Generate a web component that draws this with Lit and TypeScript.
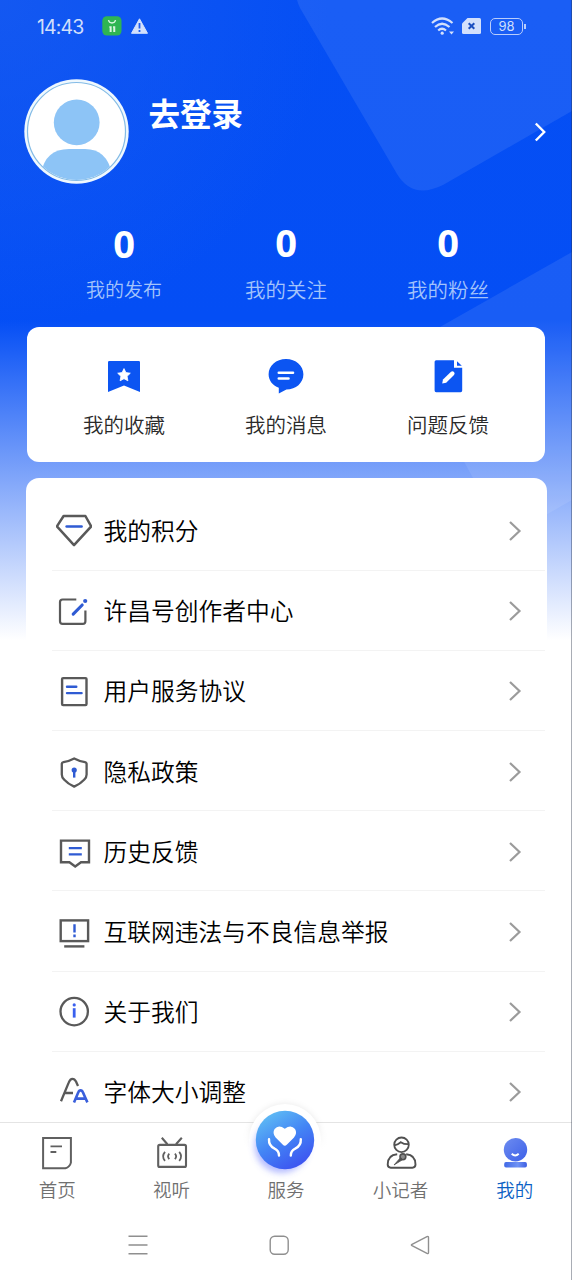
import { LitElement, html, svg, css, type TemplateResult } from "lit";
import { customElement, property } from "lit/decorators.js";
import { classMap } from "lit/directives/class-map.js";

const G = "#595959";
const B = "#2f5bd3";

/* ---------- menu icons, 36 x 36 ---------- */
const menuIcons: Record<string, TemplateResult> = {
  points: svg`<path d="M7.6 3H29.4L35.2 13.4 18 32.2.9 13.4Z" stroke=${G} stroke-width="2.5" stroke-linejoin="round"/>
    <path d="M10.6 13.4H25.6" stroke=${B} stroke-width="2.5" stroke-linecap="round"/>`,
  creator: svg`<path d="M20.3 6.5H6.6Q4 6.5 4 9.1V28.2Q4 30.8 6.6 30.8H26.8Q29.4 30.8 29.4 28.2V17.6" stroke=${G} stroke-width="2.2"/>
    <path d="M17.2 21.2 26.2 12" stroke=${B} stroke-width="3.1" stroke-linecap="round"/>
    <circle cx="29.2" cy="8" r="2.1" fill=${B}/>`,
  terms: svg`<rect x="6.1" y="5.1" width="24.4" height="27" rx="1" stroke=${G} stroke-width="2.4"/>
    <path d="M11 13.8H20.3M11 20.1H25.6" stroke=${B} stroke-width="2.4" stroke-linecap="round"/>`,
  privacy: svg`<path d="M18.2 4.4Q24 7.4 29 8.2 30.6 8.5 30.6 10V20.5Q30.6 23.2 28.4 25.4 24.4 29.8 18.2 32.6 12 29.8 8 25.4 5.8 23.2 5.8 20.5V10Q5.8 8.5 7.4 8.2 12.4 7.4 18.2 4.4Z" stroke=${G} stroke-width="2.3" stroke-linejoin="round"/>
    <circle cx="18.2" cy="16" r="2.6" fill=${B}/><path d="M18.2 16V23.6" stroke=${B} stroke-width="2.4"/>`,
  history: svg`<path d="M5 6.6H33V28.2H25L19.2 32.4 13.4 28.2H5Z" stroke=${G} stroke-width="2.4"/>
    <path d="M12.8 14.1H25.8M12.8 20.3H25.8" stroke=${B} stroke-width="2.3"/>`,
  report: svg`<rect x="4.7" y="6.4" width="27.4" height="20.7" stroke=${G} stroke-width="2.4"/>
    <path d="M8.2 32.4H28.4" stroke=${G} stroke-width="2.4"/>
    <path d="M18.5 10.2V18.6M18.5 20.6V23.2" stroke=${B} stroke-width="2.4"/>`,
  about: svg`<circle cx="18.2" cy="17.6" r="13.7" stroke=${G} stroke-width="2.3"/>
    <circle cx="18.2" cy="10.9" r="1.6" fill="#3a60ee"/><path d="M18.2 14.2V23.6" stroke="#3a60ee" stroke-width="2.8"/>`,
  font: svg`<path d="M5 27.2 12.8 8.4Q14.2 4.8 16.4 4.8 18.6 4.8 20 7.6L22 12M8.4 19H17" stroke=${G} stroke-width="2.3"/>
    <path d="M18 28.4 22.2 18.6Q23 16.4 24.6 16.4 26.2 16.4 27 18.6L31.4 28.4M20 24.6H29.6" stroke="#3a5fdc" stroke-width="2.6"/>`,
};

/* ---------- shortcut icons, 40 x 40 ---------- */
const quickIcons: Record<string, TemplateResult> = {
  fav: svg`<path d="M4 6.2Q4 5 5.2 5H34.8Q36 5 36 6.2V36L20 29.4 4 36Z" fill="#0c55f2"/>
    <path d="M20 12.6 21.9 16.6 26.3 17.2 23.1 20.3 23.9 24.8 20 22.7 16.1 24.8 16.9 20.3 13.7 17.2 18.1 16.6Z" fill="#fff" stroke="#fff" stroke-width=".8" stroke-linejoin="round"/>`,
  msg: svg`<path d="M20 3C29.9 3 37.4 9.7 37.4 18.3S29.9 33.6 20.4 33.6L12.8 37.6V31.8C6.5 29.4 2.6 24.4 2.6 18.3 2.6 9.7 10.1 3 20 3Z" fill="#0c55f2"/>
    <path d="M12.8 16.7H27M12.8 22.5H22.5" stroke="#fff" stroke-width="2.6" stroke-linecap="round"/>`,
  feedback: svg`<path d="M8.2 4.2H26V11.8H34.2V34.6Q34.2 36.2 32.6 36.2H8.2Q6.6 36.2 6.6 34.6V5.8Q6.6 4.2 8.2 4.2Z" fill="#0c55f2"/>
    <path d="M29 5.2 33.8 9.8H29Z" fill="#0c55f2"/>
    <path d="M14.2 27.6 15 23.6 23 15.8Q24.5 14.6 26 16 27.3 17.6 26 19L18.2 26.8Z" fill="#fff"/>`,
};

/* ---------- tab icons, 36 x 36 ---------- */
const T = "#606060";
const tabIcons: Record<string, TemplateResult> = {
  home: svg`<path d="M4.1 2.9H31.9V27.6Q30.9 32 26.4 33.2H4.1Z" stroke=${T} stroke-width="2"/>
    <path d="M11.5 11.4H23M11.5 17H17.3" stroke=${T} stroke-width="1.9"/>`,
  video: svg`<rect x="4.2" y="9.9" width="27.8" height="22" rx="1.5" stroke=${T} stroke-width="2.1"/>
    <path d="M7.8 2.8 13.4 9.2M27.8 2.8 22 9.2" stroke=${T} stroke-width="2.1"/>
    <path d="M11 16.8Q7.2 21.3 11 25.8M15.3 18.6Q12.8 21.3 15.3 24.2M20.9 18.6Q23.4 21.3 20.9 24.2M25.2 16.8Q29 21.3 25.2 25.8" stroke=${T} stroke-width="1.8"/>`,
  reporter: svg`<circle cx="19.5" cy="9.8" r="7.3" stroke="#505050" stroke-width="1.8"/>
    <path d="M12.4 10.4Q15.8 9.6 18.8 7.2 22 9.4 26.6 9.2" stroke="#505050" stroke-width="1.8"/>
    <path d="M15.2 19.2Q5.7 19.8 5.7 29.6 5.7 32.7 8.8 32.7H30.4Q33.5 32.7 33.5 29.6 33.5 19.8 24.2 19.2" stroke="#505050" stroke-width="1.9"/>
    <circle cx="20.9" cy="21.8" r="2.9" fill="#8a8a8a" stroke="#505050" stroke-width="1.6"/>
    <path d="M18.6 22.6 12 30 20.4 24.8Z" fill="#505050" stroke="#505050" stroke-width=".8"/>`,
  mine: svg`<defs><linearGradient id="mg" x1="0" y1="0" x2="1" y2="1"><stop offset="0" stop-color="#6d8cf0"/><stop offset="1" stop-color="#3d60e8"/></linearGradient>
      <linearGradient id="mb" x1="0" y1="0" x2="1" y2="0"><stop offset="0" stop-color="#4169e6"/><stop offset=".6" stop-color="#6f92f4"/><stop offset="1" stop-color="#3e5fe2"/></linearGradient></defs>
    <circle cx="18.5" cy="14.8" r="11.7" fill="url(#mg)"/>
    <rect x="7.2" y="27.1" width="22.7" height="5.5" rx="1.8" fill="url(#mb)"/>
    <path d="M14.7 18.8Q18.2 22.2 21.7 18.8" stroke="#fff" stroke-width="1.9"/>`,
};

@customElement("menu-row")
class MenuRow extends LitElement {
  @property() icon = "";
  @property() label = "";

  static styles = css`
    :host { display: flex; align-items: center; height: 80.2px; box-sizing: border-box;
      padding: 1px 25px 0 30.5px; position: relative; }
    :host::after { content: ""; position: absolute; left: 26px; right: 2px; bottom: 0; height: 1px; background: #f3f3f3; }
    .icon { width: 36px; height: 36px; flex: none; }
    .label { flex: 1; margin-left: 11.5px; padding-top: 2px; font-size: 23.75px; line-height: 34px; font-weight: 350; color: #000; white-space: nowrap; }
    .arrow { width: 14px; height: 22px; flex: none; }
  `;

  render() {
    return html`
      <svg class="icon" viewBox="0 0 36 36" fill="none">${menuIcons[this.icon]}</svg>
      <span class="label">${this.label}</span>
      <svg class="arrow" viewBox="0 0 14 22" fill="none">
        <path d="M2 2 11.5 11 2 20" stroke="#9b9b9b" stroke-width="2.2"/>
      </svg>`;
  }
}

@customElement("app-root")
class AppRoot extends LitElement {
  static styles = css`
    :host { display: block; width: 572px; height: 1280px; overflow: hidden; position: relative;
      font-family: Roboto, "Noto Sans CJK SC", sans-serif; font-weight: 350; background: #fff; }
    * { box-sizing: border-box; }
    svg { display: block; flex: none; }
    .backdrop { position: absolute; inset: 0 0 auto 0; width: 572px; height: 660px; }
    .edge { position: absolute; top: 0; right: 0; width: 1px; height: 100%; background: rgba(40, 50, 70, .4); }
    .screen { position: relative; display: flex; flex-direction: column; height: 1280px; }

    .status { height: 52px; display: flex; align-items: center; padding: 0 49px 0 37px; color: #d0defb; font-weight: 400; }
    .time { font-family: Inter, sans-serif; font-size: 19.5px; letter-spacing: -.85px; width: 65px; line-height: 24px; padding-top: 1px; }
    .warn { margin-left: 9px; }
    .spacer { flex: 1; }
    .sim { margin-left: 7px; }
    .battery { margin-left: 9px; width: 33px; height: 17px; border: 1.3px solid #b9cdfb; border-radius: 5px;
      font-family: Inter, sans-serif; font-size: 13px; line-height: 15px; text-align: center; position: relative; }
    .battery::after { content: ""; position: absolute; right: -3.5px; top: 5px; width: 1.5px; height: 5px; background: #b9cdfb; }

    .profile { height: 160px; display: flex; padding: 27px 24px 0 24px; }
    .name { flex: 1; margin: 14px 0 0 19.5px; font-size: 31.5px; line-height: 46px; font-weight: 700; color: #fff; }
    .go { margin-top: 42px; }

    .stats { height: 115px; padding: 0 43px; display: grid; grid-template-columns: repeat(3, 1fr); }
    .stat { display: flex; flex-direction: column; align-items: center; padding-top: 10px; }
    .num { font-family: "Noto Sans", sans-serif; font-size: 38px; line-height: 40px; font-weight: 700; color: #fff; }
    .cap { margin-top: 14px; font-size: 20.5px; line-height: 30px; color: #a3c3fb; }
    .small .num { position: relative; top: 1px; }
    .small .cap { font-size: 19px; }

    .card { height: 135px; margin: 0 27px; border-radius: 12px; background: #fff; padding: 0 16px;
      display: grid; grid-template-columns: repeat(3, 1fr); }
    .quick { display: flex; flex-direction: column; align-items: center; padding-top: 29px; }
    .quick span { margin-top: 15px; font-size: 20.5px; line-height: 30px; color: #2a2a2a; }

    .list { flex: 1; min-height: 0; overflow: hidden; margin: 16px 25.5px 0; padding-top: 12.4px;
      border-radius: 13px 13px 0 0; background: #fff; }

    .tabs { height: 88px; flex: none; background: #fff; border-top: 1px solid #e4e4e4;
      display: grid; grid-template-columns: repeat(5, 1fr); }
    .tab { display: flex; flex-direction: column; align-items: center; padding-top: 12px; font-size: 18.5px;
      line-height: 26px; color: #707070; }
    .tab span { margin-top: 7px; }
    .tab.active { color: #0b5fc4; }
    .tab.service { padding-top: 0; }
    .service svg { margin: -29px 0 0 -1px; }
    .service span { margin-top: -8px; }

    .sysnav { height: 70px; flex: none; background: #fff; display: grid; grid-template-columns: repeat(3, 141px);
      padding-left: 67px; align-items: center; justify-items: center; }
  `;

  private stats = [
    { n: 0, label: "我的发布", small: true },
    { n: 0, label: "我的关注", small: false },
    { n: 0, label: "我的粉丝", small: false },
  ];
  private quick = [
    { icon: "fav", label: "我的收藏" },
    { icon: "msg", label: "我的消息" },
    { icon: "feedback", label: "问题反馈" },
  ];
  private menu = [
    { icon: "points", label: "我的积分" },
    { icon: "creator", label: "许昌号创作者中心" },
    { icon: "terms", label: "用户服务协议" },
    { icon: "privacy", label: "隐私政策" },
    { icon: "history", label: "历史反馈" },
    { icon: "report", label: "互联网违法与不良信息举报" },
    { icon: "about", label: "关于我们" },
    { icon: "font", label: "字体大小调整" },
  ];
  private tabs = [
    { icon: "home", label: "首页" },
    { icon: "video", label: "视听" },
    { icon: "service", label: "服务" },
    { icon: "reporter", label: "小记者" },
    { icon: "mine", label: "我的", active: true },
  ];

  private backdrop() {
    return html`<svg class="backdrop" viewBox="0 0 572 660" fill="none">
      <defs>
        <linearGradient id="sky" x1="0" y1="0" x2="0" y2="660" gradientUnits="userSpaceOnUse">
          <stop offset="0" stop-color="#054ff4"/><stop offset=".485" stop-color="#044ef5"/>
          <stop offset=".97" stop-color="#fff"/>
        </linearGradient>
        <radialGradient id="glow" cx="0" cy="0" r="330" gradientUnits="userSpaceOnUse">
          <stop offset="0" stop-color="#1a5cf0" stop-opacity=".7"/><stop offset="1" stop-color="#1a5cf0" stop-opacity="0"/>
        </radialGradient>
      </defs>
      <rect width="572" height="660" fill="url(#sky)"/>
      <rect width="572" height="340" fill="url(#glow)"/>
      <path d="M297 0Q298 4 300 8L397 174Q412.7 200 443 185L572 111V0Z" fill="#fff" fill-opacity=".085"/>
      <path d="M572 252 424 336Q402 349 414 371L494 516Q507 538 530 524L572 500Z" fill="#fff" fill-opacity=".085"/>
    </svg>`;
  }

  private statusBar() {
    return html`<div class="status">
      <span class="time">14:43</span>
      <svg width="20" height="20" viewBox="0 0 20 20" fill="none">
        <rect x=".3" y=".3" width="19.2" height="19.2" rx="4.5" fill="#2fb552"/>
        <path d="M6.5 4Q7 7 10 7T13.5 4" stroke="#d8f5df" stroke-width="1.3"/>
        <path d="M7.3 11H9V16M11 11H12.6V16M8.3 11V16M11.9 11V16" stroke="#d8f5df" stroke-width="1.3"/>
      </svg>
      <svg class="warn" width="17" height="16" viewBox="0 0 17 16">
        <path d="M8.5.8 16.5 15.3H.5Z" fill="#d3e0fc" stroke="#d3e0fc" stroke-linejoin="round"/>
        <path d="M8.5 5V10.5M8.5 12V14" stroke="#1c5cf0" stroke-width="1.8"/>
      </svg>
      <span class="spacer"></span>
      <svg width="24" height="20" viewBox="0 0 24 20" fill="none">
        <path d="M1 7Q11 -2 21.5 7M4 11Q11 4.5 18.5 11M7.2 14.5Q11 11 15 14.5" stroke="#d3e0fc" stroke-width="2.2"/>
        <circle cx="11.2" cy="17.2" r="1.6" fill="#d3e0fc"/>
        <path d="M18 15.5H23L20.5 18.5Z" fill="#d3e0fc"/>
      </svg>
      <svg class="sim" width="19" height="16" viewBox="0 0 19 16">
        <path d="M5.5 0H17.5Q19 0 19 1.5V14.5Q19 16 17.5 16H1.5Q0 16 0 14.5V5.5Z" fill="#d3e0fc"/>
        <path d="M6.7 5.2 12.3 10.8M12.3 5.2 6.7 10.8" stroke="#1c4fc0" stroke-width="2"/>
      </svg>
      <div class="battery">98</div>
    </div>`;
  }

  private profile() {
    return html`<div class="profile">
      <svg width="105" height="105" viewBox="0 0 105 105" fill="none">
        <defs><clipPath id="face"><circle cx="52.5" cy="52.5" r="48.5"/></clipPath></defs>
        <circle cx="52.5" cy="52.5" r="52.2" fill="#eff8fe"/>
        <circle cx="52.5" cy="52.5" r="49" fill="#fff" stroke="#83bbe6" stroke-width="1.2"/>
        <g clip-path="url(#face)" fill="#8dc4f6">
          <circle cx="52.7" cy="43.4" r="22.9"/>
          <path d="M17 95Q21 70 45 70H61Q83 70 88 95V105H17Z"/>
        </g>
      </svg>
      <div class="name">去登录</div>
      <svg class="go" width="14" height="22" viewBox="0 0 14 22" fill="none">
        <path d="M1.8 2.5 10.2 11 1.8 19.5" stroke="#fff" stroke-width="2.4"/>
      </svg>
    </div>`;
  }

  private serviceIcon() {
    return html`<svg width="92" height="92" viewBox="-8 -8 92 92" fill="none">
      <defs>
        <linearGradient id="orb" x1=".15" y1="0" x2=".75" y2="1">
          <stop offset="0" stop-color="#62c2f4"/><stop offset=".5" stop-color="#4385f5"/><stop offset="1" stop-color="#3c50f0"/>
        </linearGradient>
        <linearGradient id="fade" x1="0" y1="0" x2="0" y2="1">
          <stop offset="0" stop-color="#fff" stop-opacity="0"/><stop offset=".4" stop-color="#fff"/>
        </linearGradient>
        <filter id="soft" x="-30%" y="-30%" width="160%" height="160%"><feGaussianBlur stdDeviation="3"/></filter>
      </defs>
      <circle cx="38" cy="38" r="36" fill="#000" fill-opacity=".09" filter="url(#soft)"/>
      <circle cx="38" cy="38" r="36" fill="#fff"/>
      <rect x="-8" y="22" width="92" height="62" fill="url(#fade)"/>
      <circle cx="34.5" cy="44" r="27" fill="#5a6cff" fill-opacity=".45" filter="url(#soft)"/>
      <circle cx="38" cy="38" r="29.2" fill="url(#orb)"/>
      <path d="M37.8 43.7Q36.8 43.7 35.6 42.5L28.6 35.5Q25 31.2 27.6 27 31.6 22 37.8 26.8 44 22 48 27 50.6 31.2 47 35.5L40 42.5Q38.8 43.7 37.8 43.7Z" fill="#fff"/>
      <path d="M22 37.2Q21.6 43.6 27.6 46.6 32 48.6 32 53.600M53.8 37.2Q54.2 43.6 48.2 46.6 43.8 48.6 43.8 53.6" stroke="#fff" stroke-width="2.4" stroke-linecap="round"/>
    </svg>`;
  }

  render() {
    return html`
      ${this.backdrop()}
      <div class="screen">
        ${this.statusBar()}
        ${this.profile()}
        <div class="stats">
          ${this.stats.map((s) => html`<div class=${classMap({ stat: true, small: s.small })}>
            <span class="num">${s.n}</span><span class="cap">${s.label}</span></div>`)}
        </div>
        <div class="card">
          ${this.quick.map((q) => html`<div class="quick">
            <svg width="40" height="40" viewBox="0 0 40 40" fill="none">${quickIcons[q.icon]}</svg>
            <span>${q.label}</span></div>`)}
        </div>
        <div class="list">
          ${this.menu.map((m) => html`<menu-row .icon=${m.icon} .label=${m.label}></menu-row>`)}
        </div>
        <div class="tabs">
          ${this.tabs.map((t) => html`<div class=${classMap({ tab: true, active: !!t.active, service: t.icon === "service" })}>
            ${t.icon === "service"
              ? this.serviceIcon()
              : html`<svg width="36" height="36" viewBox="0 0 36 36" fill="none">${tabIcons[t.icon]}</svg>`}
            <span>${t.label}</span></div>`)}
        </div>
        <div class="sysnav">
          <svg width="20" height="20" viewBox="0 0 20 20" fill="none"><path d="M.5 1.3H19.5M.5 10H19.5M.5 18.7H19.5" stroke="#8f8f8f" stroke-width="1.4"/></svg>
          <svg width="20" height="20" viewBox="0 0 20 20" fill="none"><rect x="1.2" y="1.2" width="18" height="18" rx="4.5" stroke="#8f8f8f" stroke-width="1.4"/></svg>
          <svg width="20" height="20" viewBox="0 0 20 20" fill="none"><path d="M2 9.3 17 1.6Q18.5 1 18.5 2.5V17.5Q18.5 19 17 18.4L2 10.7Q.8 10 2 9.3Z" stroke="#8f8f8f" stroke-width="1.4"/></svg>
        </div>
      </div>
      <div class="edge"></div>`;
  }
}
